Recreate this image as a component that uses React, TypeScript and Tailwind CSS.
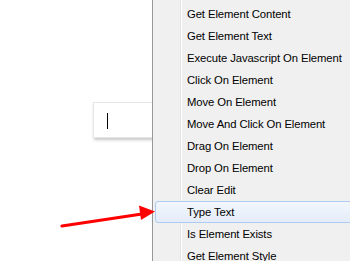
import React from "react";

const items = [
  "Get Element Content",
  "Get Element Text",
  "Execute Javascript On Element",
  "Click On Element",
  "Move On Element",
  "Move And Click On Element",
  "Drag On Element",
  "Drop On Element",
  "Clear Edit",
  "Type Text",
  "Is Element Exists",
  "Get Element Style",
];

function ContextMenu({ active }: { active: string }) {
  return (
    <div className="w-[212px] shrink-0 h-full border-l border-[#979797] bg-[linear-gradient(to_right,#f0f0f0_27px,#e2e3e3_27px,#e2e3e3_28px,#ffffff_28px,#ffffff_29px,#f0f0f0_29px)] pt-[3px] z-10">
      {items.map((label) => (
        <div
          key={label}
          className={
            "h-[22px] ml-[2px] pl-[31px] flex items-center rounded-[3px] border " +
            (label === active
              ? "border-[#aecbf0] bg-[linear-gradient(to_bottom,#f3f7fd,#e4ecf8)]"
              : "border-transparent")
          }
        >
          <span className="text-[11.3px] tracking-[-0.1px] text-black whitespace-nowrap">
            {label}
          </span>
        </div>
      ))}
    </div>
  );
}

export default function App() {
  return (
    <div
      className="relative w-[350px] h-[261px] bg-white overflow-hidden flex"
      style={{ fontFamily: '"Liberation Sans", Arial, sans-serif' }}
    >
      <div className="w-[152px] shrink-0 pt-[102px] pl-[93px] overflow-hidden">
        <div className="w-[80px] h-[36px] bg-white border border-[#e6e6e6] shadow-[1px_2px_3px_rgba(0,0,0,0.22)] pl-[13px] pt-[10px]">
          <div className="w-px h-[16px] bg-black" />
        </div>
      </div>
      <ContextMenu active="Type Text" />
      <svg
        className="absolute left-0 top-0 pointer-events-none z-20"
        width="350"
        height="261"
      >
        <line x1="62" y1="226" x2="142" y2="214" stroke="#ff0000" strokeWidth="3.2" strokeLinecap="round" />
        <polygon points="155,211.5 139,205.5 141,220" fill="#ff0000" />
      </svg>
    </div>
  );
}
